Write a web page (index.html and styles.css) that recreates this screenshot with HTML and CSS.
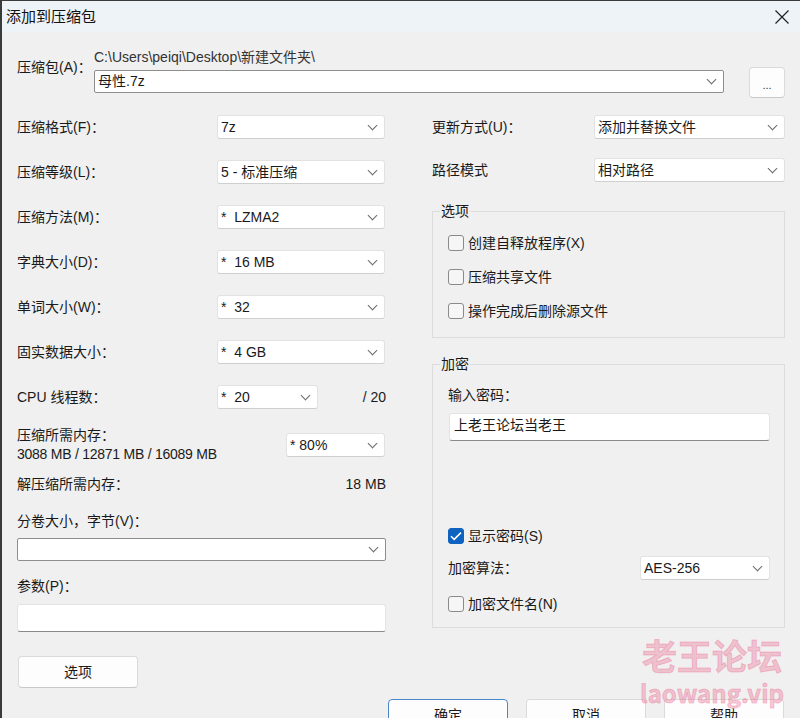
FILE: index.html
```html
<!DOCTYPE html>
<html lang="zh-CN">
<head>
<meta charset="utf-8">
<title>添加到压缩包</title>
<link rel="stylesheet" href="styles.css">
</head>
<body>
<div class="window">
  <header class="titlebar">
    <span class="title">添加到压缩包</span>
    <svg class="close" width="14" height="14" viewBox="0 0 14 14"><path d="M0.5 0.5L13.5 13.5M13.5 0.5L0.5 13.5"/></svg>
  </header>
  <main class="body">
    <section class="archive">
      <div class="archive-label">压缩包(A)：</div>
      <div class="archive-main">
        <div class="path">C:\Users\peiqi\Desktop\新建文件夹\</div>
        <div class="combo edit">母性.7z</div>
      </div>
      <button class="btn browse">...</button>
    </section>

    <div class="columns">
      <div class="col-left">
        <div class="row"><span class="lbl">压缩格式(F)：</span><div class="combo w168">7z</div></div>
        <div class="row"><span class="lbl">压缩等级(L)：</span><div class="combo w168">5 - 标准压缩</div></div>
        <div class="row"><span class="lbl">压缩方法(M)：</span><div class="combo w168">*&nbsp; LZMA2</div></div>
        <div class="row"><span class="lbl">字典大小(D)：</span><div class="combo w168">*&nbsp; 16 MB</div></div>
        <div class="row"><span class="lbl">单词大小(W)：</span><div class="combo w168">*&nbsp; 32</div></div>
        <div class="row"><span class="lbl">固实数据大小：</span><div class="combo w168">*&nbsp; 4 GB</div></div>
        <div class="row"><span class="lbl">CPU 线程数：</span><div class="combo w101">*&nbsp; 20</div><span class="suffix">/ 20</span></div>
        <div class="mem">
          <div class="mem-text">
            <div>压缩所需内存：</div>
            <div>3088 MB / 12871 MB / 16089 MB</div>
          </div>
          <div class="combo w99">* 80%</div>
        </div>
        <div class="line-between"><span>解压缩所需内存：</span><span>18 MB</span></div>
        <div class="vol-label">分卷大小，字节(V)：</div>
        <div class="combo edit full"></div>
        <div class="param-label">参数(P)：</div>
        <div class="textbox param"></div>
        <button class="btn options">选项</button>
      </div>

      <div class="col-right">
        <div class="row"><span class="lbl r">更新方式(U)：</span><div class="combo w191">添加并替换文件</div></div>
        <div class="row"><span class="lbl r">路径模式</span><div class="combo w191">相对路径</div></div>
        <fieldset class="group opts">
          <legend>选项</legend>
          <div class="cb-row"><span class="check"></span><span>创建自释放程序(X)</span></div>
          <div class="cb-row"><span class="check"></span><span>压缩共享文件</span></div>
          <div class="cb-row"><span class="check"></span><span>操作完成后删除源文件</span></div>
        </fieldset>
        <fieldset class="group enc">
          <legend>加密</legend>
          <div class="pw-label">输入密码：</div>
          <div class="textbox pw">上老王论坛当老王</div>
          <div class="cb-row show"><span class="check on"><svg width="12" height="10" viewBox="0 0 12 10"><path d="M1 5.2L4.2 8.4L11 1.6"/></svg></span><span>显示密码(S)</span></div>
          <div class="row algo"><span class="lbl a">加密算法：</span><div class="combo w130">AES-256</div></div>
          <div class="cb-row fname"><span class="check"></span><span>加密文件名(N)</span></div>
        </fieldset>
      </div>
    </div>

    <div class="actions">
      <button class="btn act primary">确定</button>
      <button class="btn act">取消</button>
      <button class="btn act">帮助</button>
    </div>
  </main>
  <div class="watermark">
    <div class="wm-cn">老王论坛</div>
    <div class="wm-en">laowang.vip</div>
  </div>
</div>
</body>
</html>
```

FILE: styles.css
```css
html, body {
  margin: 0;
  padding: 0;
  background: #f0f0f0;
}
body {
  font-family: "Liberation Sans", "Noto Sans CJK SC", sans-serif;
  font-size: 14px;
  line-height: 19px;
  color: #1a1a1a;
}
.window {
  position: relative;
  width: 800px;
  height: 718px;
  box-sizing: border-box;
  border-left: 2px solid #3a3a3a;
  border-top: 1px solid #3a3a3a;
  background: #f0f0f0;
  overflow: hidden;
}
.titlebar {
  height: 31px;
  background: #eef3f8;
  display: flex;
  align-items: center;
  justify-content: space-between;
  padding: 0 11px 0 4px;
}
.title {
  font-size: 15px;
  color: #111;
}
.close path {
  stroke: #222;
  stroke-width: 1.2;
  fill: none;
}
.body {
  padding: 0 15px;
}
.archive {
  display: grid;
  grid-template-columns: 77px 630px 61px;
  margin-top: 16px;
  align-items: start;
}
.archive-label {
  margin-top: 10px;
}
.path {
  color: #333;
  line-height: 18px;
}
.combo {
  box-sizing: border-box;
  height: 24px;
  background: #fff;
  border: 1px solid #e2e2e2;
  border-bottom-color: #cfcfcf;
  border-radius: 3px;
  display: flex;
  align-items: center;
  padding: 0 8px 0 3px;
  white-space: nowrap;
}
.combo::after {
  content: "";
  width: 6px;
  height: 6px;
  border-right: 1px solid #6a6a6a;
  border-bottom: 1px solid #6a6a6a;
  transform: rotate(45deg);
  margin-top: -4px;
  margin-left: auto;
  flex: none;
}
.combo.edit {
  height: 23px;
  border: 1px solid #8e8e8e;
  border-radius: 2px;
}
.archive-main .combo.edit {
  margin-top: 4px;
}
.btn {
  box-sizing: border-box;
  font: inherit;
  color: #1a1a1a;
  background: #fdfdfd;
  border: 1px solid #dadada;
  border-bottom-color: #c8c8c8;
  border-radius: 4px;
  padding: 0;
}
.browse {
  margin-top: 19px;
  margin-left: 25px;
  width: 36px;
  height: 31px;
  font-size: 11px;
  line-height: 11px;
  padding-top: 6px;
  color: #333;
}
.columns {
  display: flex;
  justify-content: space-between;
  margin-top: 17px;
}
.col-left {
  width: 369px;
  display: flex;
  flex-direction: column;
}
.col-right {
  width: 353px;
  display: flex;
  flex-direction: column;
}
.row {
  display: flex;
  align-items: center;
  height: 24px;
}
.row + .row {
  margin-top: 21px;
}
.col-right .row + .row {
  margin-top: 19px;
}
.lbl {
  width: 200px;
  flex: none;
}
.lbl.r {
  width: 162px;
}
.lbl.a {
  flex: 1;
}
.w168 { width: 168px; }
.w101 { width: 101px; }
.w99 { width: 99px; }
.w191 { width: 191px; }
.w130 { width: 130px; }
.suffix {
  flex: 1;
  text-align: right;
}
.mem {
  display: flex;
  align-items: center;
  justify-content: space-between;
  margin-top: 17px;
}
.mem-text div + div {
  letter-spacing: -0.25px;
}
.mem .combo {
  margin-right: 1px;
}
.line-between {
  display: flex;
  justify-content: space-between;
  margin-top: 11px;
}
.vol-label {
  margin-top: 18px;
}
.combo.full {
  margin-top: 7px;
}
.param-label {
  margin-top: 16px;
}
.textbox {
  box-sizing: border-box;
  height: 28px;
  background: #fff;
  border: 1px solid #e4e4e4;
  border-bottom-color: #8a8a8a;
  border-radius: 3px;
  padding: 0 4px;
  display: flex;
  align-items: center;
}
.param {
  margin-top: 8px;
}
.options {
  margin-top: 24px;
  margin-left: 1px;
  width: 120px;
  height: 32px;
}
.group {
  margin: 0;
  border: 1px solid #dcdcdc;
  padding: 12px 14px 16px 15px;
  min-width: 0;
}
.group legend {
  padding: 0 1px;
  margin-left: -8px;
  line-height: 19px;
}
.opts {
  margin-top: 20px;
}
.enc {
  margin-top: 17px;
  padding-bottom: 13px;
}
.cb-row {
  display: flex;
  align-items: center;
  height: 20px;
  gap: 4px;
}
.cb-row + .cb-row {
  margin-top: 14px;
}
.check {
  box-sizing: border-box;
  width: 16px;
  height: 16px;
  border: 1px solid #8a8a8a;
  border-radius: 3px;
  background: #f6f6f6;
  flex: none;
  display: flex;
  align-items: center;
  justify-content: center;
}
.check.on {
  background: #0f63c0;
  border-color: #0f63c0;
}
.check.on path {
  fill: none;
  stroke: #fff;
  stroke-width: 1.5;
}
.pw {
  margin-top: 8px;
  margin-left: 1px;
  width: 321px;
  padding-bottom: 4px;
}
.cb-row.show {
  margin-top: 85px;
}
.row.algo {
  margin-top: 10px;
}
.cb-row.fname {
  margin-top: 14px;
}
.actions {
  display: flex;
  justify-content: flex-end;
  gap: 18px;
  margin-top: 11px;
  padding-right: 1px;
}
.act {
  width: 120px;
  height: 32px;
}
.act.primary {
  border-color: #4a86c8;
}
.watermark {
  position: absolute;
  left: 636px;
  top: 632px;
  width: 148px;
  color: rgba(236, 92, 134, 0.32);
  font-family: "Noto Sans CJK SC", sans-serif;
  font-weight: 700;
  text-align: center;
  pointer-events: none;
  -webkit-text-stroke: 1px rgba(236, 92, 134, 0.32);
}
.wm-cn {
  font-size: 35px;
  line-height: 44px;
}
.wm-en {
  font-size: 24px;
  line-height: 32px;
}
```
